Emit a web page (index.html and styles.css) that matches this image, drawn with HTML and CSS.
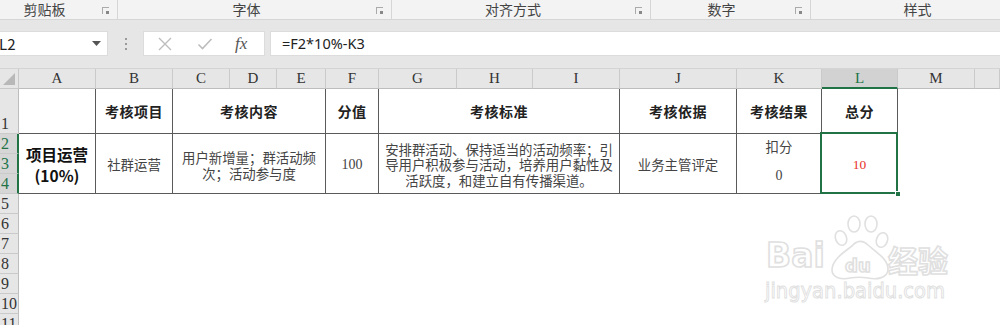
FILE: index.html
```html
<!DOCTYPE html>
<html lang="zh-CN">
<head>
    <meta charset="UTF-8">
    <title>考核表</title>
    <link rel="stylesheet" href="styles.css">
</head>
<body>
    <!-- ribbon group labels -->
    <div class="ribbon">
        <div class="group g1"><span>剪贴板</span><i class="launch"></i></div>
        <div class="group g2"><span>字体</span><i class="launch"></i></div>
        <div class="group g3"><span>对齐方式</span><i class="launch"></i></div>
        <div class="group g4"><span>数字</span><i class="launch"></i></div>
        <div class="group g5"><span>样式</span></div>
    </div>

    <!-- formula bar -->
    <div class="fbar">
        <div class="namebox">
            <span>L2</span>
            <svg width="9" height="5" viewBox="0 0 9 5"><path d="M0 0h9L4.5 5z" fill="#555"/></svg>
        </div>
        <div class="grip"><i></i><i></i><i></i></div>
        <div class="fbtns">
            <svg width="16" height="16" viewBox="0 0 16 16"><path d="M2 2l12 12M14 2L2 14" stroke="#bdbdbd" stroke-width="1.4"/></svg>
            <svg width="16" height="16" viewBox="0 0 16 16"><path d="M1.5 8.5l4 4L14.5 3" stroke="#bdbdbd" stroke-width="1.6" fill="none"/></svg>
            <span class="fx">fx</span>
        </div>
        <div class="finput">=F2*10%-K3</div>
    </div>

    <!-- worksheet -->
    <div class="sheet">
        <div class="corner"></div>
        <div class="ch">A</div>
        <div class="ch">B</div>
        <div class="ch">C</div>
        <div class="ch">D</div>
        <div class="ch">E</div>
        <div class="ch">F</div>
        <div class="ch">G</div>
        <div class="ch">H</div>
        <div class="ch">I</div>
        <div class="ch">J</div>
        <div class="ch">K</div>
        <div class="ch sel">L</div>
        <div class="ch">M</div>
        <div class="ch"></div>

        <div class="rh r1">1</div>
        <div class="rh sel r2">2</div>
        <div class="rh sel r3">3</div>
        <div class="rh sel r4">4</div>
        <div class="rh r5">5</div>
        <div class="rh r6">6</div>
        <div class="rh r7">7</div>
        <div class="rh r8">8</div>
        <div class="rh r9">9</div>
        <div class="rh r10">10</div>
        <div class="rh r11">11</div>

        <!-- header row -->
        <div class="c head colA r1"></div>
        <div class="c head colB r1">考核项目</div>
        <div class="c head colCE r1">考核内容</div>
        <div class="c head colF r1">分值</div>
        <div class="c head colGI r1">考核标准</div>
        <div class="c head colJ r1">考核依据</div>
        <div class="c head colK r1">考核结果</div>
        <div class="c head colL r1">总分</div>

        <!-- data rows 2-4 -->
        <div class="c colA body big">项目运营<br>(10%)</div>
        <div class="c colB body">社群运营</div>
        <div class="c colCE body wrap">用户新增量；群活动频<br>次；活动参与度</div>
        <div class="c colF body num">100</div>
        <div class="c colGI body wrap2">安排群活动、保持适当的活动频率；引<br>导用户积极参与活动，培养用户黏性及<br>活跃度，和建立自有传播渠道。</div>
        <div class="c colJ body">业务主管评定</div>
        <div class="c colK body result"><span>扣分</span><span class="num">0</span></div>
        <div class="c colL body num total">10<i class="handle"></i></div>
    </div>

    <!-- watermark -->
    <svg class="mark" width="200" height="110" viewBox="0 0 200 110">
        <g fill="#fff" stroke="#e0e0e0" stroke-width="1.6">
            <ellipse cx="81" cy="28" rx="5.5" ry="7.5" transform="rotate(-20 81 28)"/>
            <ellipse cx="94" cy="14" rx="6" ry="8"/>
            <ellipse cx="111" cy="14" rx="6" ry="8"/>
            <ellipse cx="122" cy="30" rx="5.5" ry="7.5" transform="rotate(20 122 30)"/>
            <path d="M92 36c-8 6-20 14-20 24 0 8 10 10 18 8 6-1 12-1 18 0 9 2 20 0 20-9 0-10-12-17-20-24-5-5-11-5-16 1z"/>
            <text x="6" y="57" font-family="'DejaVu Sans', sans-serif" font-size="33" font-weight="bold">Bai</text>
            <text x="85" y="62" font-family="'DejaVu Sans', sans-serif" font-size="18" font-weight="bold">du</text>
            <text x="128" y="62" font-family="'Noto Sans CJK SC', sans-serif" font-size="30" font-weight="bold">经验</text>
            <text x="5" y="88" font-family="'DejaVu Sans', sans-serif" font-size="22" stroke-width="1" textLength="180" lengthAdjust="spacingAndGlyphs">jingyan.baidu.com</text>
        </g>
    </svg>
</body>
</html>
```

FILE: styles.css
```css
* {
    box-sizing: border-box;
}

body {
    margin: 0;
    width: 1000px;
    height: 325px;
    overflow: hidden;
    position: relative;
    background: #e6e6e6;
    font-family: "Noto Sans CJK SC", "Noto Sans", sans-serif;
    color: #333;
}

/* ribbon */
.ribbon {
    display: flex;
    height: 20px;
    background: #f3f3f3;
    border-bottom: 1px solid #d6d6d6;
}

.group {
    position: relative;
    display: flex;
    align-items: center;
    justify-content: center;
    font-size: 14px;
    color: #444;
    border-right: 1px solid #d6d6d6;
    height: 19px;
    line-height: 19px;
    padding-right: 16px;
}

.g1 { width: 118px; padding-right: 28px; }
.g2 { width: 274px; }
.g3 { width: 259px; }
.g4 { width: 160px; padding-right: 18px; }
.g5 { width: 189px; border-right: none; padding: 0 0 0 24px; }

.launch {
    position: absolute;
    right: 8px;
    top: 7px;
    width: 7px;
    height: 7px;
    border-left: 1px solid #aaa;
    border-top: 1px solid #aaa;
}

.launch::after {
    content: "";
    position: absolute;
    right: 0;
    bottom: 0;
    width: 3px;
    height: 3px;
    background: #888;
}

/* formula bar */
.fbar {
    display: flex;
    height: 49px;
    padding: 11px 0 12px;
    border-bottom: 1px solid #d4d4d4;
}

.namebox {
    width: 108px;
    background: #fff;
    display: flex;
    align-items: center;
    justify-content: space-between;
    padding: 0 6px 0 0;
    font-size: 15px;
    color: #222;
    border: 1px solid #dcdcdc;
    border-left: none;
}

.namebox span {
    margin-left: -1px;
}

.grip {
    width: 35px;
    display: flex;
    flex-direction: column;
    align-items: center;
    justify-content: center;
    gap: 3px;
}

.grip i {
    width: 2px;
    height: 2px;
    background: #9a9a9a;
}

.fbtns {
    width: 122px;
    background: #fff;
    border: 1px solid #dcdcdc;
    display: flex;
    align-items: center;
    padding-left: 13px;
    gap: 24px;
}

.fx {
    font-family: "Liberation Serif", serif;
    font-style: italic;
    font-size: 17px;
    color: #555;
    margin-left: -2px;
}

.finput {
    flex: 1;
    margin-left: 5px;
    background: #fff;
    border: 1px solid #dcdcdc;
    border-right: none;
    padding-left: 11px;
    font-family: "Noto Sans", sans-serif;
    font-size: 14.5px;
    line-height: 23px;
    color: #222;
}

/* sheet */
.sheet {
    display: grid;
    grid-template-columns: 19px 77px 77px 57px 47px 49px 53px 78px 76px 87px 117px 85px 76px 77px 25px;
    grid-template-rows: 20px 45px repeat(10, 20px) 20px;
    height: 256px;
    overflow: hidden;
    background: #fff;
    font-family: "Liberation Serif", serif;
}

.corner {
    background: #e6e6e6;
    border-right: 1px solid #c8c8c8;
    border-bottom: 1px solid #c8c8c8;
    position: relative;
}

.corner::after {
    content: "";
    position: absolute;
    right: 3px;
    bottom: 3px;
    border-left: 12px solid transparent;
    border-bottom: 12px solid #b8b8b8;
}

.ch {
    background: #e6e6e6;
    border-right: 1px solid #cacaca;
    border-bottom: 1px solid #bdbdbd;
    text-align: center;
    font-size: 15px;
    line-height: 19px;
    color: #333;
}

.ch.sel {
    background: #d2d2d2;
    color: #217346;
    border-bottom: 2px solid #217346;
}

.rh {
    grid-column: 1;
    background: #e6e6e6;
    border-right: 1px solid #bdbdbd;
    border-bottom: 1px solid #cacaca;
    font-size: 16px;
    color: #333;
    padding-left: 1px;
    display: flex;
    align-items: flex-end;
    line-height: 19px;
}

.rh.sel {
    background: #d6d6d6;
    color: #217346;
    border-right: 2px solid #217346;
}

.r1 { grid-row: 2; }
.r2 { grid-row: 3; }
.r3 { grid-row: 4; }
.r4 { grid-row: 5; }
.r5 { grid-row: 6; }
.r6 { grid-row: 7; }
.r7 { grid-row: 8; }
.r8 { grid-row: 9; }
.r9 { grid-row: 10; }
.r10 { grid-row: 11; }
.r11 { grid-row: 12; }

.c {
    border-right: 1px solid #5a5a5a;
    border-bottom: 1px solid #5a5a5a;
    display: flex;
    align-items: center;
    justify-content: center;
    text-align: center;
    font-family: "Noto Sans CJK SC", sans-serif;
}

.body {
    grid-row: 3 / 6;
    font-size: 13.4px;
    color: #444;
}

.head {
    font-size: 14px;
    font-weight: bold;
    color: #222;
    letter-spacing: 0.5px;
}

.colA { grid-column: 2; }
.colB { grid-column: 3; }
.colCE { grid-column: 4 / 7; }
.colF { grid-column: 7; }
.colGI { grid-column: 8 / 11; }
.colJ { grid-column: 11; }
.colK { grid-column: 12; }
.colL { grid-column: 13; }

.big {
    font-size: 15.5px;
    font-weight: bold;
    color: #111;
    line-height: 21px;
    padding-top: 2px;
}

.wrap {
    line-height: 16px;
    padding-top: 3px;
}

.wrap2 {
    line-height: 15.6px;
    padding-top: 3px;
}

.num {
    font-family: "Liberation Serif", serif;
    font-size: 14px;
    padding-top: 3px;
}

.result {
    flex-direction: column;
    justify-content: flex-start;
    padding-top: 2px;
    gap: 9px;
    color: #444;
}

.total {
    position: relative;
    color: #e8322c;
    font-size: 13.5px;
}

.total::after {
    content: "";
    position: absolute;
    left: -2px;
    top: -2px;
    right: -1px;
    bottom: -1px;
    border: 2px solid #217346;
}

.handle {
    position: absolute;
    right: -4px;
    bottom: -4px;
    width: 6px;
    height: 6px;
    background: #217346;
    border: 1px solid #fff;
    z-index: 1;
}

.mark {
    position: absolute;
    left: 760px;
    top: 210px;
}
```
